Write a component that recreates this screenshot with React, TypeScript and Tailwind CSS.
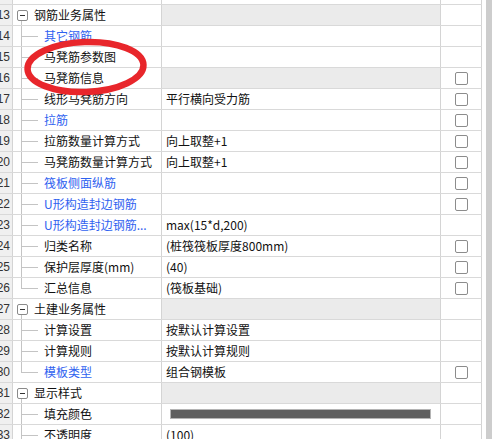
type Row = {
  no: number;
  label: string;
  kind: "group" | "child";
  blue?: boolean;
  value?: string;
  grayValue?: boolean;
  check?: boolean;
  last?: boolean;
  swatch?: boolean;
};

const ROWS: Row[] = [
  { no: 13, label: "钢筋业务属性", kind: "group", grayValue: true },
  { no: 14, label: "其它钢筋", kind: "child", blue: true },
  { no: 15, label: "马凳筋参数图", kind: "child" },
  { no: 16, label: "马凳筋信息", kind: "child", grayValue: true, check: true },
  { no: 17, label: "线形马凳筋方向", kind: "child", value: "平行横向受力筋", check: true },
  { no: 18, label: "拉筋", kind: "child", blue: true, check: true },
  { no: 19, label: "拉筋数量计算方式", kind: "child", value: "向上取整+1", check: true },
  { no: 20, label: "马凳筋数量计算方式", kind: "child", value: "向上取整+1", check: true },
  { no: 21, label: "筏板侧面纵筋", kind: "child", blue: true, check: true },
  { no: 22, label: "U形构造封边钢筋", kind: "child", blue: true, check: true },
  { no: 23, label: "U形构造封边钢筋...", kind: "child", blue: true, value: "max(15*d,200)" },
  { no: 24, label: "归类名称", kind: "child", value: "(桩筏筏板厚度800mm)", check: true },
  { no: 25, label: "保护层厚度(mm)", kind: "child", value: "(40)", check: true },
  { no: 26, label: "汇总信息", kind: "child", value: "(筏板基础)", check: true, last: true },
  { no: 27, label: "土建业务属性", kind: "group", grayValue: true },
  { no: 28, label: "计算设置", kind: "child", value: "按默认计算设置" },
  { no: 29, label: "计算规则", kind: "child", value: "按默认计算规则" },
  { no: 30, label: "模板类型", kind: "child", blue: true, value: "组合钢模板", check: true, last: true },
  { no: 31, label: "显示样式", kind: "group", grayValue: true },
  { no: 32, label: "填充颜色", kind: "child", swatch: true },
  { no: 33, label: "不透明度", kind: "child", value: "(100)" },
];

const LINE = "#c4c4c4";

function TreeMark({ row }: { row: Row }) {
  if (row.kind === "group") {
    return (
      <svg width="21" height="20" className="shrink-0">
        <rect x="4.5" y="5.5" width="10" height="10" rx="1.5" fill="white" stroke="#8a8a8a" />
        <line x1="7" y1="10.5" x2="12" y2="10.5" stroke="#333" />
        <line x1="8.5" y1="16" x2="8.5" y2="20" stroke={LINE} />
      </svg>
    );
  }
  return (
    <svg width="31" height="20" className="shrink-0">
      <line x1="8.5" y1="0" x2="8.5" y2={row.last ? 10.5 : 20} stroke={LINE} />
      <line x1="8" y1="10.5" x2="25" y2="10.5" stroke={LINE} />
    </svg>
  );
}

function Checkbox() {
  return <span className="block w-[13px] h-[13px] rounded-[2px] border border-[#8c8c8c] bg-white" />;
}

function GridRow({ row }: { row: Row }) {
  return (
    <div className="flex h-[21px] border-b border-[#d9d9d9]">
      <div
        className="w-[13px] shrink-0 overflow-hidden bg-[#f0f0f0] border-r border-[#d4d4d4] flex items-center justify-end pr-[2px] text-[12px] text-[#333] whitespace-nowrap"
        style={{ fontFamily: '"Liberation Sans", sans-serif' }}
      >
        {row.no}
      </div>
      <div className="w-[149px] shrink-0 border-r border-[#d4d4d4] flex items-center overflow-hidden whitespace-nowrap bg-white">
        <TreeMark row={row} />
        <span className={row.blue ? "text-[#2f62f0]" : "text-[#111]"}>{row.label}</span>
      </div>
      <div
        className={`w-[279px] shrink-0 border-r border-[#d4d4d4] flex items-center pl-1 whitespace-nowrap overflow-hidden ${
          row.grayValue ? "bg-[#ebebeb]" : "bg-white"
        }`}
      >
        {row.swatch ? (
          <span className="block ml-1 w-[261px] h-[10px] bg-[#5f5f5f] border border-[#b4b4b4]" />
        ) : (
          <span className="text-[#111]">{row.value}</span>
        )}
      </div>
      <div className="w-[41px] shrink-0 border-r border-[#d4d4d4] flex items-center justify-center bg-white">
        {row.check && <Checkbox />}
      </div>
    </div>
  );
}

export default function App() {
  return (
    <div
      className="relative w-[492px] h-[439px] overflow-hidden bg-white flex text-[12px] leading-none"
      style={{ fontFamily: '"Noto Sans CJK SC", "Noto Sans", sans-serif' }}
    >
      <div className="w-[482px] shrink-0 flex flex-col">
        <div className="flex h-[5px] border-b border-[#d9d9d9] shrink-0">
          <div className="w-[13px] bg-[#f0f0f0] border-r border-[#d4d4d4]" />
          <div className="w-[149px] border-r border-[#d4d4d4]" />
          <div className="w-[279px] border-r border-[#d4d4d4]" />
          <div className="w-[41px] border-r border-[#d4d4d4]" />
        </div>
        {ROWS.map((r) => (
          <GridRow key={r.no} row={r} />
        ))}
      </div>
      <div className="w-[4px] shrink-0" />
      <div className="w-[6px] shrink-0 bg-[#cdcdcd]" />

      {/* red annotation ring drawn over the grid */}
      <svg className="absolute inset-0 pointer-events-none" width="492" height="439">
        <ellipse
          cx="85.5"
          cy="67"
          rx="58"
          ry="25"
          fill="none"
          stroke="#e8262b"
          strokeWidth="6.5"
          transform="rotate(-2 85.5 67)"
        />
      </svg>
    </div>
  );
}
